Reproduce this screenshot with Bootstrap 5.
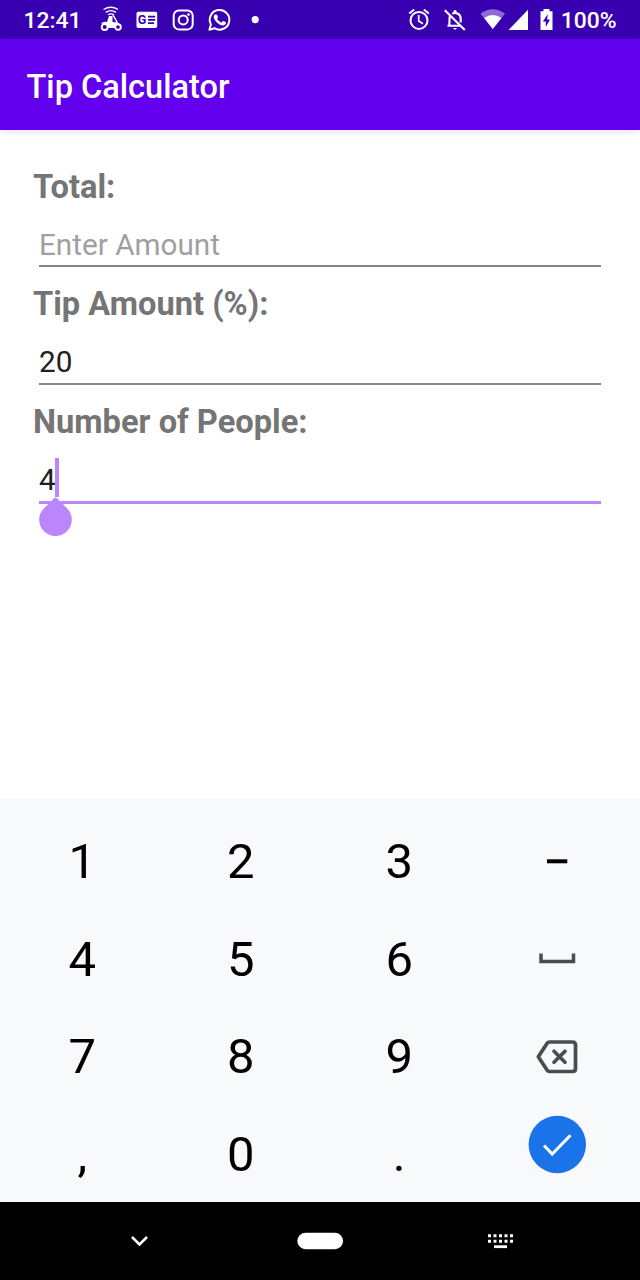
<!DOCTYPE html>
<html lang="en">
<head>
<meta charset="utf-8">
<meta name="viewport" content="width=device-width, initial-scale=1">
<title>Tip Calculator</title>
<link href="https://cdn.jsdelivr.net/npm/bootstrap@5.3.0/dist/css/bootstrap.min.css" rel="stylesheet">
<style>
body{font-family:Roboto,"Noto Sans",sans-serif;width:640px;height:1280px;overflow:hidden;background:#fff}
svg{display:block;flex:none}
.status-bar{height:39px;background:#3900b1;color:#fff;font-size:22.86px;font-weight:500;line-height:39px;padding:0 23.5px}
.status-bar span{padding-top:1px}
.clock{width:69px}
.app-bar{height:91px;background:#6200ee;padding:5px 26.5px 0;box-shadow:0 1px 8px rgba(98,0,238,.16);z-index:1}
.app-title{font-size:32.55px;font-weight:500;line-height:38px;color:#fff}
.tip-form{padding:37.5px 33px 0}
.tip-group{height:117.5px}
.tip-label{display:block;font-size:32.65px;font-weight:700;line-height:38px;color:#757575}
.tip-input{position:relative;height:61.5px;margin:0 6px;padding-top:17px;font-size:29.7px;line-height:43px;color:#212121;border-bottom:2px solid #858585}
.tip-input.active{height:63.5px;border-bottom:3px solid #bb86fc}
.tip-input.hint{color:#a0a0a0}
.caret{position:absolute;left:16px;top:17px;width:4px;height:39.5px;background:#bb86fc}
.handle{position:absolute;left:0;top:56px}
.keyboard{height:404px;background:#f8f9fb;padding:15px 3px 0;color:#000}
.key{height:97.7px;font-size:49px;line-height:98px}
.key svg{margin:1px 2.5px 0 0}
.nav-strip{height:78px;background:#000;padding:0 50px}
.nav-strip svg{width:180px}
</style>
</head>
<body class="d-flex flex-column">
<header class="status-bar d-flex align-items-center">
  <span class="clock">12:41</span>
  <svg width="36" height="39" viewBox="-18 -19.5 36 39" fill="none" stroke="#fff">
    <path d="M-7.500-10Q0-14.500 7-10M-5.300-7.200Q0-10.500 5-7.200M-3-4.800Q0-6.500 3-4.800" stroke-width="1.400"/>
    <circle cx="-6.300" cy="7.500" r="3" stroke-width="1.900"/><circle cx="7" cy="7.500" r="2.800" stroke-width="1.900"/>
    <path d="M-10 4Q-8 1.500-4 2.500L-2-3.500H1.500L1.500 2.500 6.500 3 9.800 5.500H6L3.500 8.500H-3Q-4 4.500-10 4Z" fill="#fff" stroke="none"/>
    <path d="M2-4.500L6.500 3.500" stroke-width="1.500"/>
  </svg>
  <svg width="36" height="39" viewBox="-18 -19.5 36 39">
    <rect x="-10.500" y="-7.700" width="20.700" height="16.200" rx="1.800" fill="#fff"/>
    <text x="-9.300" y="4.800" font-size="12.500" font-weight="700" fill="#3900b1">G</text>
    <path d="M1-2.900H8.200M1 .4H8.200M1 3.700H7" stroke="#3900b1" stroke-width="1.700"/>
  </svg>
  <svg width="36" height="39" viewBox="-18 -19.5 36 39" fill="none" stroke="#fff" stroke-width="2">
    <rect x="-9.300" y="-9.100" width="19" height="19" rx="5.200"/><circle cx=".2" cy=".4" r="4.500"/><circle cx="5.500" cy="-4.900" r="1.300" fill="#fff" stroke="none"/>
  </svg>
  <svg width="36" height="39" viewBox="-18 -19.5 36 39">
    <path d="M-9.600 10.200L-8.100 4.900A9.800 9.800 0 1 1-4.500 8.700Z" fill="none" stroke="#fff" stroke-width="2" stroke-linejoin="round"/>
    <path d="M-3.900-5.100H-2.600Q-2.100-5-1.900-4.400L-1-2.300Q-1-1.700-2-.7-.3 2.200 2.400 3.200L3.700 1.700Q4.100 1.300 4.700 1.600L6.900 2.700Q7 5.300 4.200 5.900 1.600 6.200-2.200 2.900-5.400-.5-5.300-3-5.100-4.500-3.900-5.100Z" fill="#fff"/>
  </svg>
  <svg width="36" height="39" viewBox="-18 -19.5 36 39"><circle cx=".2" cy=".1" r="3.600" fill="#fff"/></svg>
  <svg class="ms-auto" width="36" height="39" viewBox="-18 -19.5 36 39" fill="none" stroke="#fff" stroke-width="2">
    <circle cx="0" cy=".9" r="8.500"/><path d="M-.3-4.500V1.500L4 4.200" stroke-width="1.700"/><path d="M-9.800-6L-4.800-10M9.800-6L4.800-10"/>
  </svg>
  <svg width="36" height="39" viewBox="-18 -19.500 36 39" fill="none" stroke="#fff" stroke-width="2.100">
    <path d="M-5.200-3.200Q-5.600-1-5.600 6.300H4M-7.500 6.300H5M-2.800-5.700Q0-7.200 3-5.800 5.500-4.500 5.700-1V3"/>
    <path d="M-1.600-7V-8.500Q0-10.700 1.600-8.500V-7ZM-2 8.500H2Q0 12-2 8.500Z" fill="#fff" stroke="none"/>
    <path d="M-10.200-9.300L9.800 10.500"/>
  </svg>
  <svg class="ms-2" width="26" height="39" viewBox="2 0 26 39">
    <path d="M1.500 13.500Q13.800 5 26 13.500L13.800 29Z" fill="#8e6bd2"/><path d="M5.100 18Q13.800 11.800 22.500 18L13.800 29Z" fill="#fff"/>
  </svg>
  <svg width="22" height="39" viewBox="1 0 22 39"><path d="M2.500 30L22 9.800V30Z" fill="#fff"/></svg>
  <svg width="32" height="39" viewBox="0 0 32 39">
    <path d="M11.500 11.200H14.500V9H20.500V11.200H23.500V30H11.500Z" fill="#fff"/><path d="M18.800 14L13.900 21.500H16.800V27L21 19.500H18.100Z" fill="#3900b1"/>
  </svg>
  <span>100%</span>
</header>
<div class="app-bar d-flex align-items-center"><h1 class="app-title mb-0">Tip Calculator</h1></div>
<main class="tip-form flex-grow-1">
  <div class="tip-group"><span class="tip-label">Total:</span><div class="tip-input hint">Enter Amount</div></div>
  <div class="tip-group"><span class="tip-label">Tip Amount (%):</span><div class="tip-input">20</div></div>
  <div class="tip-group"><span class="tip-label">Number of People:</span>
    <div class="tip-input active">4<span class="caret"></span>
      <svg class="handle" width="34" height="40" viewBox="0 0 34 40"><path d="M16.500 .5Q18 .8 19 2.200L28 11.200A16.300 16.300 0 1 1 5 11.200L14 2.200Q15 .8 16.500 .5Z" fill="#bb86fc"/></svg>
    </div>
  </div>
</main>
<section class="keyboard">
  <div class="row g-0 text-center">
    <div class="col-3 key">1</div><div class="col-3 key">2</div><div class="col-3 key">3</div>
    <div class="col-3 key d-flex justify-content-center"><svg width="60" height="97" viewBox="0 0 60 97"><path d="M20 47.300H40.300" stroke="#000" stroke-width="4"/></svg></div>
    <div class="col-3 key">4</div><div class="col-3 key">5</div><div class="col-3 key">6</div>
    <div class="col-3 key d-flex justify-content-center"><svg width="60" height="97" viewBox="0 0 60 97"><path d="M14 41.500V49.500H46.500V41.500" fill="none" stroke="#4b4c4f" stroke-width="3.500"/></svg></div>
    <div class="col-3 key">7</div><div class="col-3 key">8</div><div class="col-3 key">9</div>
    <div class="col-3 key d-flex justify-content-center"><svg width="60" height="97" viewBox="0 0 60 97" fill="none" stroke="#4b4c4f" stroke-width="3.700" stroke-linejoin="round" stroke-linecap="round"><path d="M22.500 33H45.500Q48.500 33 48.500 36V59.500Q48.500 62.500 45.500 62.500H22.500Q21 62.500 20 61L11.300 47.800 20 34.500Q21 33 22.500 33ZM27 42.300L38 53.300M38 42.300L27 53.300"/></svg></div>
    <div class="col-3 key">,</div><div class="col-3 key">0</div><div class="col-3 key">.</div>
    <div class="col-3 key d-flex justify-content-center"><svg width="60" height="91" viewBox="0 0 60 91"><circle cx="30.300" cy="37.500" r="28.700" fill="#1a73e8"/><path d="M17 38.500L25.200 47 43.500 28.300" fill="none" stroke="#fff" stroke-width="3"/></svg></div>
  </div>
</section>
<nav class="nav-strip d-flex justify-content-between">
  <svg height="78" viewBox="0 0 180 78"><path d="M82 35L89.500 42.500 97 35" fill="none" stroke="#fff" stroke-width="2.500"/></svg>
  <svg height="78" viewBox="0 0 180 78"><rect x="67.300" y="30.700" width="45.800" height="16.600" rx="8.300" fill="#fff"/></svg>
  <svg height="78" viewBox="0 0 180 78"><path d="M78 33.700H103M78 39.200H103" stroke="#fff" stroke-width="3" stroke-dasharray="3 2.500"/><path d="M84 44.700H97" stroke="#fff" stroke-width="2.800"/></svg>
</nav>
<script src="https://cdn.jsdelivr.net/npm/bootstrap@5.3.0/dist/js/bootstrap.bundle.min.js"></script>
</body>
</html>
